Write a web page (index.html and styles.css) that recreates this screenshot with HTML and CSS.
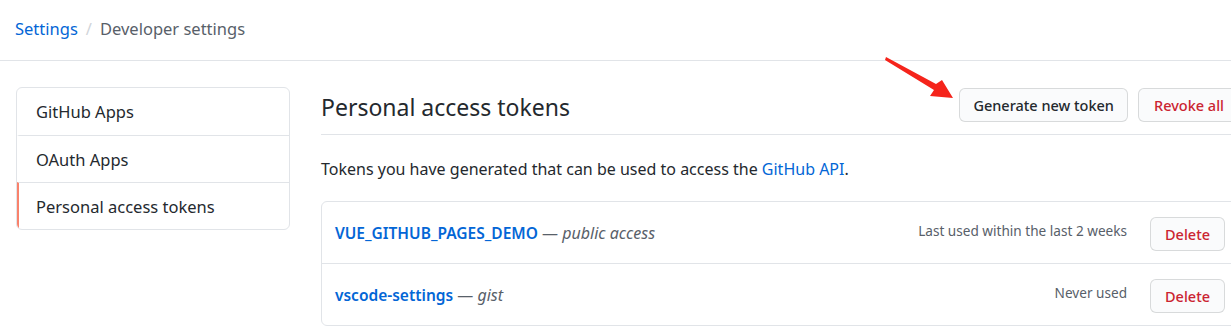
FILE: index.html
```html
<!DOCTYPE html>
<html>
<head>
<meta charset="utf-8">
<link rel="stylesheet" href="styles.css">
</head>
<body>
<header class="topbar">
  <nav class="crumbs">
    <a class="crumb-link" href="#">Settings</a>
    <span class="crumb-sep">/</span>
    <span class="crumb-current">Developer settings</span>
  </nav>
</header>
<div class="layout">
  <aside class="menu">
    <a class="menu-item" href="#">GitHub Apps</a>
    <a class="menu-item" href="#">OAuth Apps</a>
    <a class="menu-item selected" href="#">Personal access tokens</a>
  </aside>
  <main class="main">
    <div class="subhead">
      <h2 class="subhead-title">Personal access tokens</h2>
      <div class="subhead-actions">
        <button class="btn">Generate new token</button>
        <button class="btn btn-danger">Revoke all</button>
      </div>
    </div>
    <p class="intro">Tokens you have generated that can be used to access the <a href="#" class="api-link">GitHub API</a>.</p>
    <div class="token-list">
      <div class="token-row">
        <div class="token-info"><a href="#" class="token-name">VUE_GITHUB_PAGES_DEMO</a> <span class="token-scope">— <em>public access</em></span></div>
        <span class="token-used">Last used within the last 2 weeks</span>
        <button class="btn btn-danger btn-sm">Delete</button>
      </div>
      <div class="token-row">
        <div class="token-info"><a href="#" class="token-name">vscode-settings</a> <span class="token-scope">— <em>gist</em></span></div>
        <span class="token-used">Never used</span>
        <button class="btn btn-danger btn-sm">Delete</button>
      </div>
    </div>
  </main>
</div>
<svg class="arrow" width="80" height="55" viewBox="880 50 80 55">
  <polygon points="886,57 936,84 942,80 953,98 930,96 934,90 885,60" fill="#f5241b"/>
</svg>
</body>
</html>
```
FILE: styles.css
```css
html, body {
  margin: 0;
  padding: 0;
  background: #fff;
  overflow: hidden;
}
body {
  font-family: "Noto Sans", "Open Sans", sans-serif;
  color: #24292e;
  width: 1231px;
  height: 326px;
  position: relative;
}
a { text-decoration: none; }

.topbar {
  height: 60px;
  border-bottom: 1px solid #e1e4e8;
  display: flex;
  align-items: center;
  padding-left: 15px;
}
.crumbs {
  font-size: 16.5px;
  display: flex;
  align-items: center;
  gap: 8px;
  margin-top: -3px;
}
.crumb-link { color: #0366d6; }
.crumb-sep { color: #d1d5da; }
.crumb-current { color: #586069; }

.layout {
  display: flex;
  align-items: flex-start;
  padding-top: 26px;
  padding-left: 16px;
  gap: 31px;
}
.menu {
  width: 272px;
  flex: none;
  border: 1px solid #e1e4e8;
  border-radius: 6px;
  display: flex;
  flex-direction: column;
  overflow: hidden;
}
.menu-item {
  height: 46px;
  display: flex;
  align-items: center;
  padding-left: 17px;
  font-size: 16.5px;
  color: #24292e;
  border-top: 1px solid #e1e4e8;
  border-left: 2px solid transparent;
}
.menu-item:first-child { border-top: 0; height: 47px; }
.menu-item.selected { border-left-color: #f9826c; }

.main {
  width: 919px;
  flex: none;
}
.subhead {
  height: 47px;
  border-bottom: 1px solid #e1e4e8;
  display: flex;
  align-items: flex-start;
  justify-content: space-between;
}
.subhead-title {
  margin: 0;
  font-size: 23px;
  font-weight: 400;
  line-height: 40px;
}
.subhead-actions {
  display: flex;
  gap: 10px;
  padding-top: 1px;
}
.btn {
  font-family: inherit;
  font-size: 14.5px;
  font-weight: 500;
  color: #24292e;
  background: #fafbfc;
  border: 1px solid rgba(27,31,35,.15);
  border-radius: 6px;
  height: 34px;
  padding: 0 13px;
  cursor: pointer;
}
.btn-danger { color: #cb2431; }
.btn-danger:not(.btn-sm) { padding: 0 15px; }
.btn-sm { width: 75px; padding: 0; margin-top: 2px; }

.intro {
  margin: 0;
  padding-top: 21px;
  height: 45px;
  font-size: 16px;
  line-height: 27px;
}
.api-link { color: #0366d6; }

.token-list {
  border: 1px solid #e1e4e8;
  border-radius: 6px;
}
.token-row {
  height: 61px;
  display: flex;
  align-items: center;
  padding: 0 14px 0 13px;
  border-top: 1px solid #e1e4e8;
}
.token-row:first-child { border-top: 0; }
.token-info {
  flex: 1;
  font-size: 16px;
}
.token-name {
  color: #0366d6;
  font-weight: 600;
  font-size: 15.5px;
}
.token-scope { color: #586069; }
.token-used {
  font-size: 13.6px;
  color: #586069;
  margin-right: 23px;
  margin-top: -4px;
}

.arrow {
  position: absolute;
  left: 880px;
  top: 50px;
}
```
